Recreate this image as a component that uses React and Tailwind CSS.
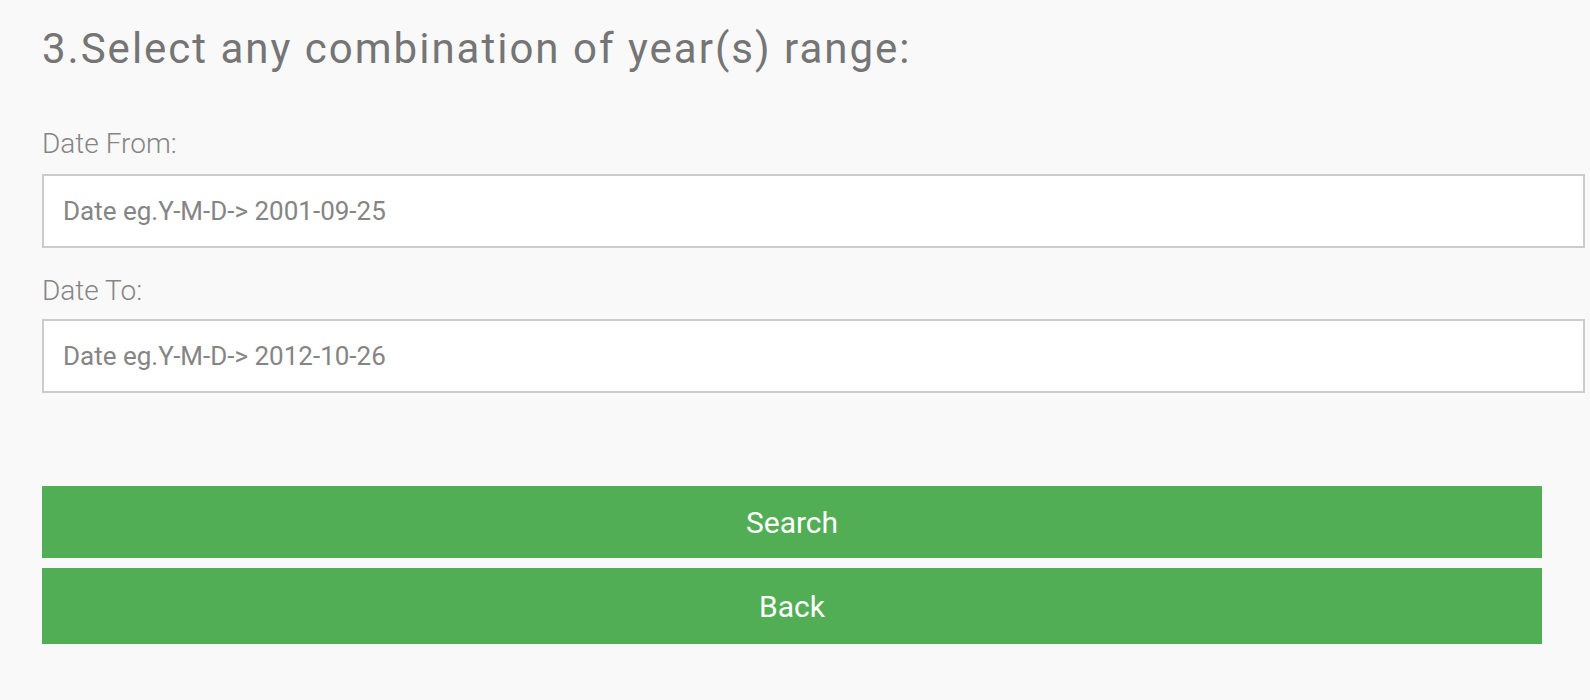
export default function App() {
  return (
    <div className="min-h-[700px] w-full bg-[#f9f9f9] font-['Roboto',sans-serif]">
      <div className="pl-[42px] pt-[25px]">
        <h1 className="text-[42px] leading-[48px] font-normal text-[#757575] tracking-[2px]">
          3.Select any combination of year(s) range:
        </h1>
        <label className="mt-[55px] block text-[28px] leading-[32px] font-light text-[#858585]">
          Date From:
        </label>
        <input
          type="text"
          placeholder="Date eg.Y-M-D-> 2001-09-25"
          className="mt-[14px] block h-[74px] w-[1543px] border-2 border-[#cccccc] bg-white px-[19px] text-[26px] text-[#777] placeholder:text-[#858585] outline-none"
        />
        <label className="mt-[27px] block text-[28px] leading-[32px] font-light text-[#858585]">
          Date To:
        </label>
        <input
          type="text"
          placeholder="Date eg.Y-M-D-> 2012-10-26"
          className="mt-[12px] block h-[74px] w-[1543px] border-2 border-[#cccccc] bg-white px-[19px] text-[26px] text-[#777] placeholder:text-[#858585] outline-none"
        />
        <div className="mt-[93px] flex w-[1500px] flex-col gap-[10px]">
          <button className="h-[72px] w-full bg-[#51ae55] text-[30px] text-white">
            Search
          </button>
          <button className="h-[76px] w-full bg-[#51ae55] text-[30px] text-white">
            Back
          </button>
        </div>
      </div>
    </div>
  );
}
